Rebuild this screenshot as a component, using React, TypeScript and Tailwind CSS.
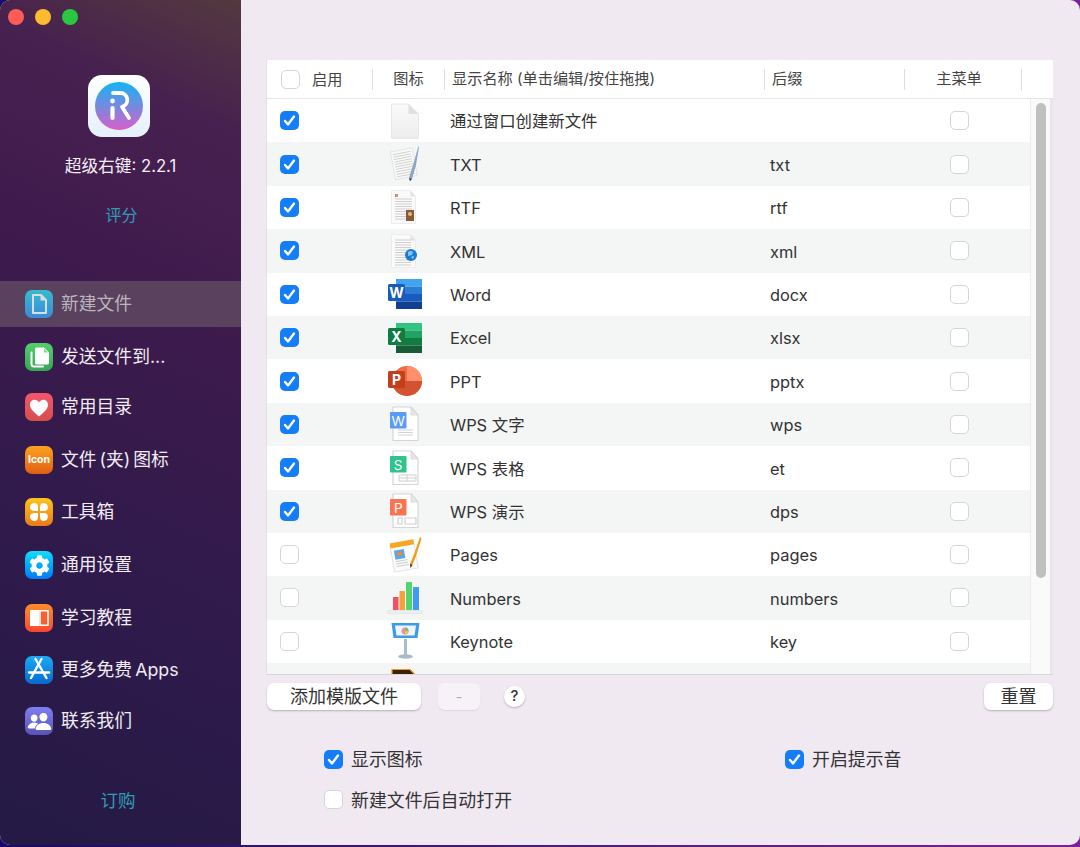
import { ReactNode } from "react";
import { FaCog } from "react-icons/fa";
import { IoPeople } from "react-icons/io5";

const Check = ({ on, className = "" }: { on?: boolean; className?: string }) => (
	<div
		className={`w-[19px] h-[19px] shrink-0 rounded-[5px] flex items-center justify-center ${
			on ? "bg-[#147dfa]" : "bg-white border border-[#d6d5d7]"
		} ${className}`}
	>
		{on && (
			<svg viewBox="0 0 19 19" className="w-[19px] h-[19px]">
				<path d="M5 10l3 3.4L14 5.6" fill="none" stroke="#fff" strokeWidth="2.4" strokeLinecap="round" strokeLinejoin="round" />
			</svg>
		)}
	</div>
);

/* ---------- sidebar icons ---------- */

const NewFileGlyph = () => (
	<svg viewBox="0 0 28 28" className="w-7 h-7">
		<path d="M8 5h8l5 5v13H8z" fill="none" stroke="#d7dde2" strokeWidth="2" strokeLinejoin="round" />
		<path d="M15.500 5v5.500H21z" fill="#d7dde2" />
	</svg>
);

const SendGlyph = () => (
	<svg viewBox="0 0 28 28" className="w-7 h-7">
		<path d="M6.500 9.500v11.500q0 2.500 2.500 2.500h9" fill="none" stroke="#fff" strokeWidth="2" strokeLinecap="round" />
		<path d="M10 6q0-1.500 1.500-1.500h7.500l5 5V20q0 1.500-1.500 1.500h-11Q10 21.500 10 20z" fill="#fff" />
		<path d="M19 5.500v4h4z" fill="#7fdc96" />
	</svg>
);

const HeartGlyph = () => (
	<svg viewBox="0 0 28 28" className="w-7 h-7">
		<path d="M14 23.500C8 18.500 5 15.500 5 11.500 5 8.500 7.300 6.800 9.500 6.800c2 0 3.500 1 4.500 2.700 1-1.700 2.500-2.700 4.500-2.700 2.200 0 4.500 1.700 4.500 4.700 0 4-3 7-9 12z" fill="#fff" />
	</svg>
);

const PetalsGlyph = () => (
	<svg viewBox="0 0 28 28" className="w-7 h-7" fill="#fff">
		<path d="M5 9.500a4.500 4.500 0 0 1 4.500-4.500c2.500 0 3.500 2 3.500 4.500V13H9.500C7 13 5 12 5 9.500z" />
		<path d="M23 9.500A4.500 4.500 0 0 0 18.500 5C16 5 15 7 15 9.500V13h3.500C21 13 23 12 23 9.500z" />
		<path d="M5 18.500A4.500 4.500 0 0 0 9.500 23c2.500 0 3.500-2 3.500-4.500V15H9.500C7 15 5 16 5 18.500z" />
		<path d="M23 18.500a4.500 4.500 0 0 1-4.500 4.500C16 23 15 21 15 18.500V15h3.500c2.500 0 4.500 1 4.500 3.500z" />
	</svg>
);

const BookGlyph = () => (
	<svg viewBox="0 0 28 28" className="w-7 h-7">
		<path d="M5 6h9v16H5z" fill="#fff" />
		<path d="M15 6.800h8v14.400h-8z" fill="#fb5d2f" stroke="#fff" strokeWidth="1.600" />
	</svg>
);

const StoreGlyph = () => (
	<svg viewBox="0 0 28 28" className="w-7 h-7" fill="none" stroke="#fff" strokeWidth="2.400" strokeLinecap="round">
		<path d="M16.500 3L6 22" />
		<path d="M10.500 3L21.500 22" />
		<path d="M4 16.500h7.500" />
		<path d="M13 16.500h11" />
	</svg>
);

const navItems: { label: string; color: string; icon: ReactNode; gap: string; active?: boolean }[] = [
	{ label: "新建文件", color: "bg-linear-to-b from-[#36bccb] to-[#3a8ad8]", icon: <NewFileGlyph />, gap: "mt-0", active: true },
	{ label: "发送文件到...", color: "bg-linear-to-b from-[#52d06c] to-[#38a554]", icon: <SendGlyph />, gap: "mt-[7px]" },
	{ label: "常用目录", color: "bg-linear-to-b from-[#f4566c] to-[#d2504c]", icon: <HeartGlyph />, gap: "mt-[4px]" },
	{
		label: "文件 (夹) 图标",
		color: "bg-linear-to-b from-[#faa31d] to-[#e05e14]",
		icon: <span className="text-[10.500px] font-bold text-white font-['Inter']">Icon</span>,
		gap: "mt-[7px]",
	},
	{ label: "工具箱", color: "bg-linear-to-b from-[#fcc41c] to-[#ea7a16]", icon: <PetalsGlyph />, gap: "mt-[6px]" },
	{ label: "通用设置", color: "bg-linear-to-b from-[#19dcfb] to-[#0a79f5]", icon: <FaCog className="w-[21px] h-[21px] text-white" />, gap: "mt-[7px]" },
	{ label: "学习教程", color: "bg-linear-to-b from-[#fc8c2b] to-[#f9452f]", icon: <BookGlyph />, gap: "mt-[7px]" },
	{ label: "更多免费 Apps", color: "bg-linear-to-b from-[#1cabf6] to-[#0a69cf]", icon: <StoreGlyph />, gap: "mt-[6px]" },
	{ label: "联系我们", color: "bg-linear-to-b from-[#7f7ef2] to-[#5a54b6]", icon: <IoPeople className="w-[25px] h-[25px] text-white" />, gap: "mt-[5px]" },
];

const Sidebar = () => (
	<div className="w-[241px] shrink-0 h-full flex flex-col bg-[linear-gradient(205deg,#54393f_0%,#47214f_14%,#3e1a4d_35%,#301a4c_65%,#241a45_100%)]">
		<div className="flex gap-[11px] pl-[8px] pt-[9px]">
			<div className="w-4 h-4 rounded-full bg-[#fe5c55]" />
			<div className="w-4 h-4 rounded-full bg-[#febb30]" />
			<div className="w-4 h-4 rounded-full bg-[#29c840]" />
		</div>
		<div className="mt-[50px] ml-[88px] w-[62px] h-[62px] rounded-[14px] bg-linear-to-b from-white to-[#e4f1fb] flex items-center justify-center">
			<svg viewBox="0 0 48 48" className="w-12 h-12">
				<defs>
					<linearGradient id="logo" x1="0" y1="0" x2="0" y2="1">
						<stop offset="0" stopColor="#12b5f3" />
						<stop offset="1" stopColor="#d85fcb" />
					</linearGradient>
				</defs>
				<circle cx="24" cy="24" r="24" fill="url(#logo)" />
				<circle cx="17.500" cy="19" r="2.400" fill="#fff" />
				<path d="M17.500 26v10" stroke="#fff" strokeWidth="4.200" strokeLinecap="round" />
				<path d="M18 11h7.500a7 7 0 0 1 1.500 13.800L34 36" fill="none" stroke="#fff" strokeWidth="3.800" strokeLinecap="round" strokeLinejoin="round" />
			</svg>
		</div>
		<div className="mt-[16px] text-center text-[16.700px] leading-[26px] text-[#f3eef4]">超级右键: 2.2.1</div>
		<div className="mt-[24px] ml-[2px] text-center text-[16px] leading-[24px] text-[#2f9db5]">评分</div>
		<div className="mt-[54px] flex flex-col">
			{navItems.map((item) => (
				<div
					key={item.label}
					className={`h-[46px] flex items-center pl-[25px] gap-2 ${item.gap} ${item.active ? "bg-[#5a425f]" : ""}`}
				>
					<div className={`w-7 h-7 rounded-[7px] flex items-center justify-center ${item.color}`}>{item.icon}</div>
					<span className={`text-[17.800px] [word-spacing:-2px] ${item.active ? "text-[#bbb5bf]" : "text-[#f0ecf2]"}`}>{item.label}</span>
				</div>
			))}
		</div>
		<div className="mt-[44px] pr-[5px] text-center text-[17.500px] leading-[26px] text-[#2f9db5]">订购</div>
	</div>
);

/* ---------- table file icons, 36x38 canvas ---------- */

const Doc = ({ children }: { children?: ReactNode }) => (
	<svg viewBox="0 0 36 38" className="w-9 h-[38px]">
		<path d="M4.500 2.500h19l5 6v27h-24z" fill="#fafafa" stroke="#ececec" />
		<path d="M23.500 2.500v6h5z" fill="#e2e2e2" />
		{children}
	</svg>
);

const Lines = ({ x, y, w, n, color = "#c9c9c9" }: { x: number; y: number; w: number; n: number; color?: string }) => (
	<>
		{Array.from({ length: n }, (_, i) => (
			<path key={i} d={`M${x} ${y + i * 2.5}h${w}`} stroke={color} strokeWidth="0.900" />
		))}
	</>
);

const BlankIcon = () => (
	<svg viewBox="0 0 36 38" className="w-9 h-[38px]">
		<defs>
			<linearGradient id="blank" x1="0" y1="0" x2="0" y2="1">
				<stop offset="0" stopColor="#fafafa" />
				<stop offset="1" stopColor="#ededed" />
			</linearGradient>
		</defs>
		<path d="M5 2.500q0-.5.5-.5H22l10 10v23q0 1.500-1.500 1.500h-24Q5 36.500 5 35z" transform="translate(-0.500 0)" fill="url(#blank)" stroke="#e8e8e8" />
		<path d="M21.500 2v10h10z" fill="#e0e0e0" />
	</svg>
);

const TxtIcon = () => (
	<svg viewBox="0 0 36 38" className="w-9 h-[38px]">
		<g transform="rotate(-11 16 20)">
			<path d="M6 5h22v28H6z" fill="#fafaf8" stroke="#e3e3e3" />
			<Lines x={8} y={8} w={18} n={10} color="#cfcfcf" />
		</g>
		<path d="M31.500 1L26 20l-4 13 1 3 2-2 4-14 3-18z" fill="#8ba6c4" />
		<path d="M22 33l1 3 2-2z" fill="#444" />
	</svg>
);

const RtfIcon = () => (
	<Doc>
		<path d="M8 6h3v3H8z" fill="#d98a5e" />
		<Lines x={8} y={11} w={17} n={9} />
		<path d="M19 22h8v11h-8z" fill="#8a5a36" />
		<circle cx="23" cy="26" r="2" fill="#e3b98a" />
	</Doc>
);

const XmlIcon = () => (
	<Doc>
		<Lines x={8} y={8} w={16} n={11} />
		<circle cx="24" cy="23" r="6" fill="#1c7bd4" />
		<path d="M21 20q3-2 5 0l-1 3-4 1z" fill="#7fc4f5" />
		<path d="M24 25l3-1-1 3z" fill="#9ed4f7" />
	</Doc>
);

const OfficeSquare = ({ fill, letter }: { fill: string; letter: string }) => (
	<>
		<rect x="1" y="9" width="17" height="17" rx="1.500" fill={fill} />
		<text x="9.500" y="22.500" textAnchor="middle" fontSize="14" fontWeight="700" fill="#fff" fontFamily="Inter">
			{letter}
		</text>
	</>
);

const StripedOffice = ({ colors, square, letter }: { colors: string[]; square: string; letter: string }) => (
	<svg viewBox="0 0 36 38" className="w-9 h-[38px]">
		{colors.map((c, i) => (
			<rect key={c} x="9" y={4 + i * 7.500} width="26" height="7.500" fill={c} />
		))}
		<OfficeSquare fill={square} letter={letter} />
	</svg>
);

const PptIcon = () => (
	<svg viewBox="0 0 36 38" className="w-9 h-[38px]">
		<circle cx="20" cy="19" r="15" fill="#ed6c47" />
		<path d="M20 4a15 15 0 0 1 15 15H20z" fill="#ff8f6b" />
		<path d="M35 19a15 15 0 0 1-30 0z" fill="#d35230" />
		<OfficeSquare fill="#c43e1c" letter="P" />
	</svg>
);

const WpsIcon = ({ fill, letter, kind }: { fill: string; letter: string; kind: "doc" | "sheet" | "slide" }) => (
	<svg viewBox="0 0 36 38" className="w-9 h-[38px]">
		<path d="M6 2h18l7 8v25.500H6z" fill="#fff" stroke="#d5d5d5" strokeWidth="1.200" strokeLinejoin="round" />
		<path d="M24 2v8h7z" fill="#e6e6e6" stroke="#d5d5d5" strokeWidth="0.800" />
		{kind === "doc" && <Lines x={11} y={25} w={15} n={3} color="#cfcfcf" />}
		{kind === "sheet" && <path d="M12 26h17v6H12zM12 29h17M20 26v6" fill="none" stroke="#cfcfcf" />}
		{kind === "slide" && <path d="M11 26h4v6h-4zM18 26h11v6H18z" fill="none" stroke="#cfcfcf" strokeWidth="1.200" />}
		<rect x="3" y="7" width="16.500" height="16.500" rx="1" fill={fill} />
		<text x="11.200" y="20.500" textAnchor="middle" fontSize="13.500" fill="#fff" fontFamily="Inter">
			{letter}
		</text>
	</svg>
);

const PagesIcon = () => (
	<svg viewBox="0 0 36 38" className="w-9 h-[38px]">
		<g transform="rotate(-10 18 20)">
			<path d="M5 7h24v27H5z" fill="#fbfbfb" stroke="#e2e2e2" />
			<path d="M5 5h24v5H5z" fill="#f5a623" />
			<path d="M8 13h10v9H8z" fill="#5aa7e8" />
			<path d="M13 20l-3-4 1.500-1.500L13 16l1.500-1.500L16 16z" fill="#f08a24" />
			<Lines x={8} y={24} w={12} n={3} />
		</g>
		<path d="M33 1l-7 20-3 7 .5 2 2-1.500 3-7 6-19z" fill="#f29a1e" />
		<path d="M23 28l.5 4 2-3z" fill="#333" />
	</svg>
);

const NumbersIcon = () => (
	<svg viewBox="0 0 36 38" className="w-9 h-[38px]">
		<path d="M1 31.500h34l.5 3H.500z" fill="#eceff0" stroke="#dcdcdc" strokeWidth="0.500" />
		<rect x="6" y="18" width="5.500" height="13" rx="0.500" fill="#ef5167" />
		<rect x="12.500" y="12" width="5.500" height="19" rx="0.500" fill="#f5a13a" />
		<rect x="19" y="3" width="6" height="28" rx="0.500" fill="#51d56c" />
		<rect x="26" y="8" width="6" height="23" rx="0.500" fill="#3f9cf2" />
	</svg>
);

const KeynoteIcon = () => (
	<svg viewBox="0 0 36 38" className="w-9 h-[38px]">
		<path d="M17 17h3v17h-3z" fill="#a9bccb" />
		<ellipse cx="18.500" cy="34.500" rx="7.500" ry="2.200" fill="#a8bac8" />
		<path d="M4.500 1h28l-2 15h-24z" fill="#3f9be8" />
		<path d="M8 3.500h21l-1.500 10h-18z" fill="#eef6fd" />
		<circle cx="18" cy="9" r="3.500" fill="#f08fa0" />
		<path d="M18 9V5.500a3.500 3.500 0 0 1 3.500 3.500z" fill="#6bc46b" />
		<path d="M18 9h3.500a3.500 3.500 0 0 1-3.500 3.500z" fill="#f5c14a" />
	</svg>
);

const IllustratorIcon = () => (
	<svg viewBox="0 0 36 38" className="w-9 h-[38px]">
		<path d="M5 3.500h18l6 6v26H5z" fill="#3a2208" stroke="#f29a1e" strokeWidth="1.200" />
	</svg>
);

const rows: { on: boolean; name: string; ext: string; icon: ReactNode }[] = [
	{ on: true, name: "通过窗口创建新文件", ext: "", icon: <BlankIcon /> },
	{ on: true, name: "TXT", ext: "txt", icon: <TxtIcon /> },
	{ on: true, name: "RTF", ext: "rtf", icon: <RtfIcon /> },
	{ on: true, name: "XML", ext: "xml", icon: <XmlIcon /> },
	{ on: true, name: "Word", ext: "docx", icon: <StripedOffice colors={["#41a5ee", "#2b7cd3", "#185abd", "#103f91"]} square="#185abd" letter="W" /> },
	{ on: true, name: "Excel", ext: "xlsx", icon: <StripedOffice colors={["#33c481", "#21a366", "#107c41", "#185c37"]} square="#107c41" letter="X" /> },
	{ on: true, name: "PPT", ext: "pptx", icon: <PptIcon /> },
	{ on: true, name: "WPS 文字", ext: "wps", icon: <WpsIcon fill="#5b9bf8" letter="W" kind="doc" /> },
	{ on: true, name: "WPS 表格", ext: "et", icon: <WpsIcon fill="#2fc38d" letter="S" kind="sheet" /> },
	{ on: true, name: "WPS 演示", ext: "dps", icon: <WpsIcon fill="#fb7350" letter="P" kind="slide" /> },
	{ on: false, name: "Pages", ext: "pages", icon: <PagesIcon /> },
	{ on: false, name: "Numbers", ext: "numbers", icon: <NumbersIcon /> },
	{ on: false, name: "Keynote", ext: "key", icon: <KeynoteIcon /> },
	{ on: false, name: "", ext: "", icon: <IllustratorIcon /> },
];

const Table = () => (
	<div className="w-[786px] h-[615px] shrink-0 flex flex-col bg-white border-b border-[#dad6db] shadow-[-1px_0_0_#e4e1e5]">
		<div className="h-[38px] shrink-0 flex items-center text-[15.200px] text-[#444]">
			<div className="w-[106px] h-[21px] flex items-center pl-[14px] border-r border-[#dddddd]">
				<Check />
				<span className="ml-[12px] pt-[2px]">启用</span>
			</div>
			<div className="w-[72px] h-[21px] flex items-center justify-center pt-[1px] border-r border-[#dddddd]">图标</div>
			<div className="w-[320px] h-[21px] flex items-center pl-[7px] pt-[1px] border-r border-[#dddddd]">显示名称 (单击编辑/按住拖拽)</div>
			<div className="w-[140px] h-[21px] flex items-center pl-[7px] pt-[1px] border-r border-[#dddddd]">后缀</div>
			<div className="w-[117px] h-[21px] flex items-center justify-center pr-[8px] pt-[1px] border-r border-[#dddddd]">主菜单</div>
		</div>
		<div className="flex-1 min-h-0 flex border-t border-[#e6e6e6]">
			<div className="w-[764px] overflow-hidden border-r border-[#ececec]">
				{rows.map((row, i) => (
					<div
						key={row.name + i}
						className={`h-[43.400px] flex items-center text-[16.400px] text-[#333] ${i % 2 === 1 ? "bg-[#f4f5f5]" : "bg-white"}`}
					>
						<div className="w-[102px] pl-[13px]">
							<Check on={row.on} />
						</div>
						<div className="w-[72px] flex justify-center">{row.icon}</div>
						<div className="w-[324px] pl-[9px] pt-[2px]">{row.name}</div>
						<div className="w-[140px] pl-[5px] pt-[2px]">{row.ext}</div>
						<div className="w-[109px] flex justify-center">{row.name && <Check />}</div>
					</div>
				))}
			</div>
			<div className="flex-1 bg-[#fafafa] border-r-[3px] border-[#e9e6ea] pt-[4px] pl-[5px]">
				<div className="w-[10px] h-[475px] rounded-full bg-[#c0c0c0]" />
			</div>
		</div>
	</div>
);

const ButtonRow = () => (
	<div className="mt-[8px] w-[786px] h-[27px] flex items-center">
		<button className="w-[154px] h-[27px] rounded-[7px] bg-white text-[18px] text-[#333] shadow-[0_1px_2px_rgba(0,0,0,0.25)]">添加模版文件</button>
		<button className="ml-[17px] w-[42px] h-[27px] rounded-[7px] bg-[#f6f2f7] text-[14px] text-[#aaa] shadow-[0_1px_1px_rgba(0,0,0,0.08)]">-</button>
		<div className="ml-[24px] w-[21px] h-[21px] rounded-full bg-white flex items-center justify-center text-[15px] font-medium text-[#333] shadow-[0_1px_2px_rgba(0,0,0,0.25)]">?</div>
		<button className="ml-auto w-[69px] h-[27px] rounded-[7px] bg-white text-[18px] text-[#333] shadow-[0_1px_2px_rgba(0,0,0,0.25)]">重置</button>
	</div>
);

const Options = () => (
	<div className="mt-[40px] pl-[57px] text-[17.900px] text-[#333]">
		<div className="flex">
			<div className="w-[461px] h-[19px] flex items-center gap-2">
				<Check on />
				<span className="pt-[2px]">显示图标</span>
			</div>
			<div className="h-[19px] flex items-center gap-2">
				<Check on />
				<span className="pt-[2px]">开启提示音</span>
			</div>
		</div>
		<div className="mt-[21px] h-[19px] flex items-center gap-2">
			<Check />
			<span className="pt-[3px]">新建文件后自动打开</span>
		</div>
	</div>
);

const App = () => (
	<div className="w-[1080px] h-[847px] overflow-hidden bg-linear-to-r from-[#17096b] to-[#7b1fa2] font-['Inter','Noto_Sans_CJK_SC',sans-serif]">
		<div className="w-[1080px] h-[845px] overflow-hidden rounded-[10px] flex bg-[#f1e9f2]">
			<Sidebar />
			<div className="flex-1 pt-[60px] pl-[26px] flex flex-col">
				<Table />
				<ButtonRow />
				<Options />
			</div>
		</div>
	</div>
);

export default App;
